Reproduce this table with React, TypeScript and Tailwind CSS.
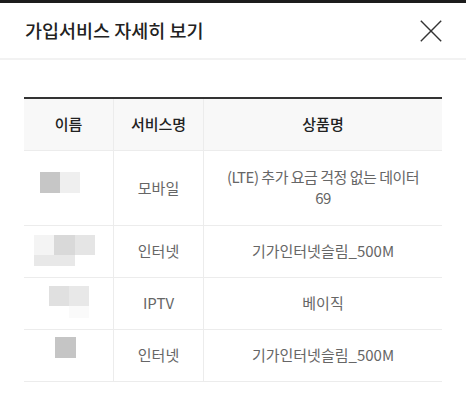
const font = { fontFamily: '"Noto Sans CJK KR", "Noto Sans", sans-serif' };

function Block({ c, w = 'w-[20px]', h = 'h-[20px]' }: { c: string; w?: string; h?: string }) {
    return <div className={`${w} ${h} ${c}`} />;
}

function CloseIcon() {
    return (
        <svg width="22" height="22" viewBox="0 0 22 22" fill="none" stroke="#333" strokeWidth="1.4">
            <line x1="0.8" y1="0.8" x2="21.2" y2="21.2" />
            <line x1="21.2" y1="0.8" x2="0.8" y2="21.2" />
        </svg>
    );
}

export default function App() {
    return (
        <div className="w-[466px] h-[409px] bg-white overflow-hidden" style={font}>
            <div className="h-[3px] bg-[#1c1c1c]" />
            <div className="h-[55px] flex items-center justify-between pl-[25px] pr-[24px]">
                <h1 className="text-[18.5px] font-medium text-[#222]">가입서비스 자세히 보기</h1>
                <CloseIcon />
            </div>
            <div className="h-[2px] bg-[#f2f2f2]" />

            <div className="mt-[37px] mx-[24px] border-t-2 border-[#333] text-[15px]">
                <div className="grid grid-cols-[90px_90px_1fr] h-[52px] bg-[#f8f8f8] border-b border-[#ececec] text-[#222] font-medium">
                    <div className="flex items-center justify-center border-r border-[#ececec]">이름</div>
                    <div className="flex items-center justify-center border-r border-[#ececec]">서비스명</div>
                    <div className="flex items-center justify-center">상품명</div>
                </div>

                <div className="grid grid-cols-[90px_90px_1fr] h-[75px] border-b border-[#ececec] text-[#666]">
                    <div className="border-r border-[#ececec] pl-[16px] pt-[21px]">
                        <div className="flex">
                            <Block c="bg-[#c6c6c6]" h="h-[21px]" />
                            <Block c="bg-[#efefef]" h="h-[21px]" />
                        </div>
                    </div>
                    <div className="flex items-center justify-center border-r border-[#ececec]">모바일</div>
                    <div className="flex items-center justify-center -mt-[2px]">
                        <p className="text-center leading-[21px] tracking-[-0.5px]">
                            (LTE) 추가 요금 걱정 없는 데이터<br />69
                        </p>
                    </div>
                </div>

                <div className="grid grid-cols-[90px_90px_1fr] h-[52px] border-b border-[#ececec] text-[#666]">
                    <div className="border-r border-[#ececec] pl-[10px] pt-[9px]">
                        <div className="flex">
                            <Block c="bg-[#f4f4f4]" />
                            <Block c="bg-[#d9d9d9]" w="w-[21px]" />
                            <Block c="bg-[#e5e5e5]" />
                        </div>
                        <div className="flex">
                            <Block c="bg-[#e8e8e8]" h="h-[11px]" />
                            <Block c="bg-[#e8e8e8]" w="w-[21px]" h="h-[11px]" />
                        </div>
                    </div>
                    <div className="flex items-center justify-center border-r border-[#ececec]">인터넷</div>
                    <div className="flex items-center justify-center">기가인터넷슬림_500M</div>
                </div>

                <div className="grid grid-cols-[90px_90px_1fr] h-[52px] border-b border-[#ececec] text-[#666]">
                    <div className="border-r border-[#ececec] pl-[25px] pt-[8px]">
                        <div className="flex">
                            <Block c="bg-[#e0e0e0]" />
                            <Block c="bg-[#e8e8e8]" />
                        </div>
                        <div className="flex">
                            <Block c="bg-transparent" h="h-[12px]" />
                            <Block c="bg-[#fafafa]" h="h-[12px]" />
                        </div>
                    </div>
                    <div className="flex items-center justify-center border-r border-[#ececec]">IPTV</div>
                    <div className="flex items-center justify-center">베이직</div>
                </div>

                <div className="grid grid-cols-[90px_90px_1fr] h-[52px] border-b border-[#ececec] text-[#666]">
                    <div className="border-r border-[#ececec] pl-[31px] pt-[7px]">
                        <Block c="bg-[#c5c5c5]" w="w-[21px]" h="h-[21px]" />
                    </div>
                    <div className="flex items-center justify-center border-r border-[#ececec]">인터넷</div>
                    <div className="flex items-center justify-center">기가인터넷슬림_500M</div>
                </div>
            </div>
        </div>
    );
}
